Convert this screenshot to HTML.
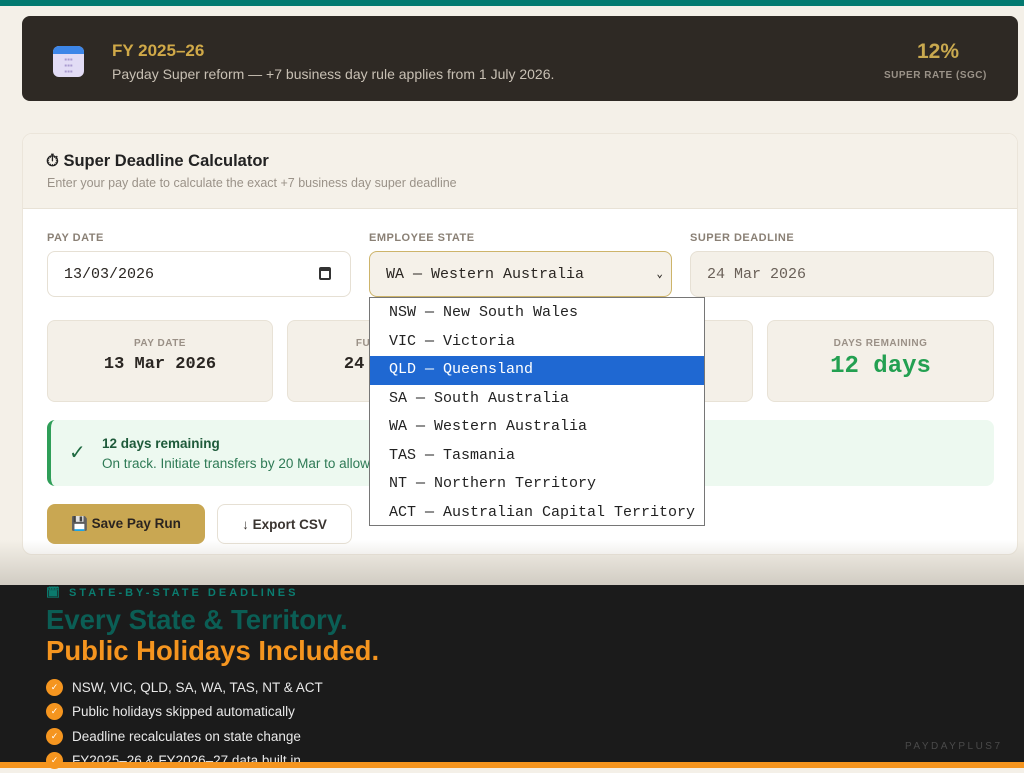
<!DOCTYPE html>
<html><head><meta charset="utf-8"><style>
*{box-sizing:border-box;margin:0;padding:0}
body{width:1024px;height:768px;overflow:hidden;background:#f4f0e8;font-family:"Liberation Sans",sans-serif;position:relative}
.abs{position:absolute}
.mono{font-family:"Liberation Mono","DejaVu Sans Mono",monospace}
.lbl{font-size:11px;font-weight:bold;color:#8a8075;letter-spacing:.5px}
.inp{border:1px solid #e6e0d4;border-radius:8px;height:46px;display:flex;align-items:center;padding-left:16px;font-size:15px;color:#2a2622}
.stat{background:#f4f0e8;border:1px solid #e8e2d6;border-radius:8px;height:82px;top:320px;text-align:center}
.stat .t{font-size:10px;font-weight:bold;color:#9a9086;letter-spacing:.5px;margin-top:17px}
.stat .v{font-size:17px;font-weight:bold;color:#2a2622;margin-top:6px}
.dd div{height:28.5px;line-height:28.5px;padding-left:19px;font-size:15px;color:#222}
.li{display:flex;align-items:center;font-size:13.5px;color:#e8e8e8;height:24.5px}
.ck{width:17px;height:17px;border-radius:50%;background:#f5951f;color:#fff;font-size:9px;display:flex;align-items:center;justify-content:center;margin-right:9px}
</style></head><body>
<div class="abs" style="left:0;top:0;width:1024px;height:6px;background:#037a70"></div>
<div class="abs" style="left:22px;top:16px;width:996px;height:85px;background:#2e2924;border-radius:8px"></div>
<div class="abs" style="left:53px;top:46px;width:31px;height:31px;border-radius:6px;background:#e2dcf5;overflow:hidden"><div style="height:8px;background:#3d86e8"></div><div style="color:#a99bd0;font-size:8px;text-align:center;line-height:6px;margin-top:3px">▪▪▪<br>▪▪▪<br>▪▪▪</div></div>
<div class="abs" style="left:112px;top:41px;font-size:17px;font-weight:bold;color:#d0a948">FY 2025–26</div>
<div class="abs" style="left:112px;top:66px;font-size:14px;color:#c8c0b4">Payday Super reform — +7 business day rule applies from 1 July 2026.</div>
<div class="abs" style="left:917px;top:40px;font-size:21px;font-weight:bold;color:#c9a94f">12%</div>
<div class="abs" style="left:884px;top:70px;font-size:10px;font-weight:bold;color:#9a9288;letter-spacing:.5px">SUPER RATE (SGC)</div>

<div class="abs" style="left:22px;top:133px;width:996px;height:422px;background:#fff;border:1px solid #ebe5da;border-radius:10px;overflow:hidden">
<div style="height:75px;background:#f5f1e9;border-bottom:1px solid #e8e2d6"></div></div>
<div class="abs" style="left:46px;top:152px;font-size:16.5px;font-weight:bold;color:#222">⏱ Super Deadline Calculator</div>
<div class="abs" style="left:47px;top:176px;font-size:12.5px;color:#9a9288">Enter your pay date to calculate the exact +7 business day super deadline</div>

<div class="abs lbl" style="left:47px;top:232px">PAY DATE</div>
<div class="abs lbl" style="left:369px;top:232px">EMPLOYEE STATE</div>
<div class="abs lbl" style="left:690px;top:232px">SUPER DEADLINE</div>
<div class="abs inp mono" style="left:47px;top:251px;width:304px;background:#fff">13/03/2026<span style="position:absolute;right:19px;top:15px;width:12px;height:13px;border:2px solid #333;border-top-width:4px;border-radius:2px"></span></div>
<div class="abs inp mono" style="left:369px;top:251px;width:303px;background:#f5f1e9;border-color:#cdb46a">WA — Western Australia<span style="position:absolute;right:8px;font-size:11px;font-weight:bold">⌄</span></div>
<div class="abs inp mono" style="left:690px;top:251px;width:304px;background:#f4f0e8;color:#6a6058">24 Mar 2026</div>

<div class="abs stat" style="left:47px;width:226px"><div class="t">PAY DATE</div><div class="v mono">13 Mar 2026</div></div>
<div class="abs stat" style="left:287px;width:226px"><div class="t">FUND DEADLINE</div><div class="v mono">24 Mar 2026</div></div>
<div class="abs stat" style="left:527px;width:226px"><div class="t">BUSINESS DAYS (+7)</div><div class="v mono">7</div></div>
<div class="abs stat" style="left:767px;width:227px"><div class="t">DAYS REMAINING</div><div class="v" style="color:#23a051;font-size:24px;margin-top:4px;font-family:'Liberation Mono',monospace">12 days</div></div>

<div class="abs" style="left:47px;top:420px;width:947px;height:66px;background:#edf9f0;border-left:4px solid #2f9e58;border-radius:8px"></div>
<div class="abs" style="left:69px;top:440px;font-size:20px;color:#1e6a40">✓</div>
<div class="abs" style="left:102px;top:436px;font-size:13.5px;font-weight:bold;color:#1e5a3a">12 days remaining</div>
<div class="abs" style="left:102px;top:456px;font-size:13.5px;color:#2e7a55">On track. Initiate transfers by 20 Mar to allow clearing time.</div>

<div class="abs" style="left:47px;top:504px;width:158px;height:40px;background:#c9a752;border-radius:8px;font-size:13.5px;font-weight:bold;color:#2a2420;display:flex;align-items:center;justify-content:center">💾 Save Pay Run</div>
<div class="abs" style="left:217px;top:504px;width:135px;height:40px;background:#fff;border:1px solid #e6e0d4;border-radius:8px;font-size:13.5px;font-weight:bold;color:#3a3430;display:flex;align-items:center;justify-content:center">↓ Export CSV</div>

<div class="abs dd mono" style="left:369px;top:297px;width:336px;height:229px;background:#fff;border:1px solid #767676;padding-top:1px">
<div>NSW — New South Wales</div><div>VIC — Victoria</div><div style="background:#1f68d2;color:#fff">QLD — Queensland</div><div>SA — South Australia</div><div>WA — Western Australia</div><div>TAS — Tasmania</div><div>NT — Northern Territory</div><div>ACT — Australian Capital Territory</div></div>

<div class="abs" style="left:0;top:540px;width:1024px;height:45px;background:linear-gradient(rgba(200,195,185,0),rgba(200,195,185,.8))"></div>
<div class="abs" style="left:0;top:585px;width:1024px;height:183px;background:#1b1b1b"></div>
<div class="abs" style="left:46px;top:586px;font-size:11px;font-weight:bold;color:#0b7d70;letter-spacing:3px">🗓 STATE-BY-STATE DEADLINES</div>
<div class="abs" style="left:46px;top:604px;font-size:27.5px;font-weight:bold;color:#0b5e55">Every State &amp; Territory.</div>
<div class="abs" style="left:46px;top:635px;font-size:27.5px;font-weight:bold;color:#f5951f">Public Holidays Included.</div>
<div class="abs" style="left:46px;top:675px">
<div class="li"><span class="ck">✓</span>NSW, VIC, QLD, SA, WA, TAS, NT &amp; ACT</div>
<div class="li"><span class="ck">✓</span>Public holidays skipped automatically</div>
<div class="li"><span class="ck">✓</span>Deadline recalculates on state change</div>
<div class="li"><span class="ck">✓</span>FY2025–26 &amp; FY2026–27 data built in</div></div>
<div class="abs" style="left:905px;top:741px;font-size:10px;color:#4a4a4a;letter-spacing:2.5px">PAYDAYPLUS7</div>
<div class="abs" style="left:0;top:762px;width:1024px;height:6px;background:#f5951f"></div>
</body></html>
